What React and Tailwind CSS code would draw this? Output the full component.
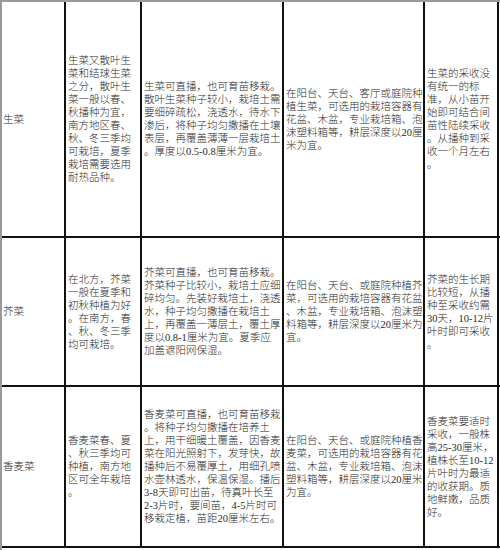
const rows = [
  {
    h: 'h-[236px]',
    name: '生菜',
    cells: [
      ['生菜又散叶生', '菜和结球生菜', '之分，散叶生', '菜一般以春、', '秋播种为宜，', '南方地区春、', '秋、冬三季均', '可栽培，夏季', '栽培需要选用', '耐热品种。'],
      ['生菜可直播，也可育苗移栽。', '散叶生菜种子较小，栽培土需', '要细碎疏松，浇透水，待水下', '渗后，将种子均匀撒播在土壤', '表层，再覆盖薄薄一层栽培土', '。厚度以0.5-0.8厘米为宜。'],
      ['在阳台、天台、客厅或庭院种', '植生菜，可选用的栽培容器有', '花盆、木盆，专业栽培箱、泡', '沫塑料箱等，耕层深度以20厘', '米为宜。'],
      ['生菜的采收没', '有统一的标', '准，从小苗开', '始即可结合间', '苗性陆续采收', '。从播种到采', '收一个月左右', '。'],
    ],
  },
  {
    h: 'h-[149px]',
    name: '芥菜',
    cells: [
      ['在北方，芥菜', '一般在夏季和', '初秋种植为好', '。在南方，春', '、秋、冬三季', '均可栽培。'],
      ['芥菜可直播，也可育苗移栽。', '芥菜种子比较小，栽培土应细', '碎均匀。先装好栽培土，浇透', '水，种子均匀撒播在栽培土', '上，再覆盖一薄层土，覆土厚', '度以0.8-1厘米为宜。夏季应', '加盖遮阳网保湿。'],
      ['在阳台、天台、或庭院种植芥', '菜，可选用的栽培容器有花盆', '、木盆，专业栽培箱、泡沫塑', '料箱等，耕层深度以20厘米为', '宜。'],
      ['芥菜的生长期', '比较短，从播', '种至采收约需', '30天，10-12片', '叶时即可采收', '。'],
    ],
  },
  {
    h: 'h-[161px]',
    name: '香麦菜',
    cells: [
      ['香麦菜春、夏', '、秋三季均可', '种植，南方地', '区可全年栽培', '。'],
      ['香麦菜可直播，也可育苗移栽', '。将种子均匀撒播在培养土', '上，用干细暖土覆盖，因香麦', '菜在阳光照射下，发芽快，故', '播种后不易覆厚土，用细孔喷', '水壶林透水，保温保湿。播后', '3-8天即可出苗，待真叶长至', '2-3片时，要间苗，4-5片时可', '移栽定植，苗距20厘米左右。'],
      ['在阳台、天台、或庭院种植香', '麦菜，可选用的栽培容器有花', '盆、木盆，专业栽培箱、泡沫', '塑料箱等，耕层深度以20厘米', '为宜。'],
      ['香麦菜要适时', '采收，一般株', '高25-30厘米，', '植株长至10-12', '片叶时为最适', '的收获期。质', '地鲜嫩，品质', '好。'],
    ],
  },
]

function Cell({ lines }) {
  return (
    <div className="flex flex-col justify-center border-r-2 border-[#111] px-[2px] overflow-hidden">
      {lines.map((l, i) => (
        <div key={i} className="whitespace-nowrap">{l}</div>
      ))}
    </div>
  )
}

export default function App() {
  return (
    <div
      className="w-[500px] h-[550px] bg-white border-t-2 border-l-2 border-[#9a9a9a] text-[10.5px] leading-[13px] font-light text-[#2a2a2a]"
      style={{ fontFamily: '"Liberation Serif", "Noto Sans CJK SC", serif' }}
    >
      {rows.map((r) => (
        <div
          key={r.name}
          className={`${r.h} grid grid-cols-[64px_76px_142px_141px_74px] border-b-2 border-[#111]`}
        >
          <div className="flex items-center border-r-2 border-[#111] px-[1px]">{r.name}</div>
          {r.cells.map((c, i) => (
            <Cell key={i} lines={c} />
          ))}
        </div>
      ))}
    </div>
  )
}
